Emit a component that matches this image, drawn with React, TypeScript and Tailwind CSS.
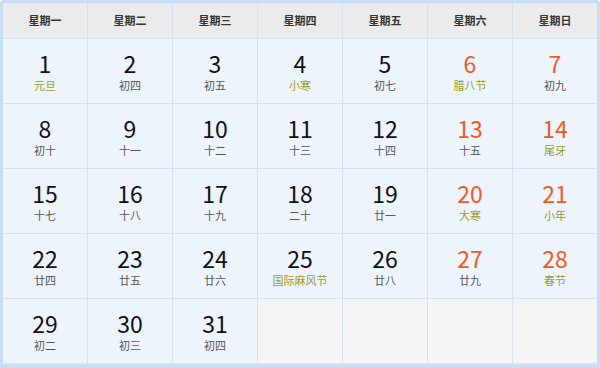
import React from "react";

type Day = { n: number; lunar: string; red?: boolean; fest?: boolean };

const weekdays = ["星期一", "星期二", "星期三", "星期四", "星期五", "星期六", "星期日"];

const days: Day[] = [
    {n: 1, lunar: "元旦", fest: true},
    {n: 2, lunar: "初四"},
    {n: 3, lunar: "初五"},
    {n: 4, lunar: "小寒", fest: true},
    {n: 5, lunar: "初七"},
    {n: 6, lunar: "腊八节", red: true, fest: true},
    {n: 7, lunar: "初九", red: true},
    {n: 8, lunar: "初十"},
    {n: 9, lunar: "十一"},
    {n: 10, lunar: "十二"},
    {n: 11, lunar: "十三"},
    {n: 12, lunar: "十四"},
    {n: 13, lunar: "十五", red: true},
    {n: 14, lunar: "尾牙", red: true, fest: true},
    {n: 15, lunar: "十七"},
    {n: 16, lunar: "十八"},
    {n: 17, lunar: "十九"},
    {n: 18, lunar: "二十"},
    {n: 19, lunar: "廿一"},
    {n: 20, lunar: "大寒", red: true, fest: true},
    {n: 21, lunar: "小年", red: true, fest: true},
    {n: 22, lunar: "廿四"},
    {n: 23, lunar: "廿五"},
    {n: 24, lunar: "廿六"},
    {n: 25, lunar: "国际麻风节", fest: true},
    {n: 26, lunar: "廿八"},
    {n: 27, lunar: "廿九", red: true},
    {n: 28, lunar: "春节", red: true, fest: true},
    {n: 29, lunar: "初二"},
    {n: 30, lunar: "初三"},
    {n: 31, lunar: "初四"},
];

const font = {fontFamily: '"Noto Sans CJK SC", "Noto Sans", sans-serif'};

export default function App() {
    return (
        <div className="w-[600px] h-[368px] bg-white" style={font}>
            <div className="w-[600px] h-[368px] border-[3px] border-[#c9dcf6] rounded-t-[4px] bg-[#d5e2f2] overflow-hidden">
                <div className="grid grid-cols-7 gap-px grid-rows-[35px_repeat(5,64px)]">
                    {weekdays.map((w) => (
                        <div key={w}
                             className="bg-[#ebebeb] flex items-center justify-center text-[11px] font-bold text-[#333]">
                            {w}
                        </div>
                    ))}
                    {days.map((d) => (
                        <div key={d.n} className="bg-[#edf4fc] flex flex-col items-center pt-[13px]">
                            <span
                                className={"text-[23px] leading-[23px] " + (d.red ? "text-[#f05a1e]" : "text-[#111]")}>
                                {d.n}
                            </span>
                            <span
                                className={"mt-[4px] text-[11px] leading-[13px] " + (d.fest ? "text-[#95a01c]" : "text-[#555]")}>
                                {d.lunar}
                            </span>
                        </div>
                    ))}
                    {[0, 1, 2, 3].map((i) => (
                        <div key={"e" + i} className="bg-[#f4f4f4]"/>
                    ))}
                </div>
            </div>
        </div>
    );
}
